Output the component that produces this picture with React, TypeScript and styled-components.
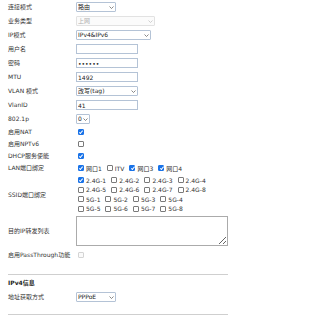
import React from "react";
import styled, {createGlobalStyle} from "styled-components";

const GlobalStyle = createGlobalStyle`
  html, body {
    margin: 0;
    padding: 0;
    background: #fff;
  }
  body {
    font-family: "DejaVu Sans", "Noto Sans CJK SC", sans-serif;
    font-size: 6px;
    color: #333;
  }
`;

const Page = styled.div`
  width: 220px;
  padding: 0 8px;
`;

const Row = styled.div<{ $h?: number; $pt?: number; $pb?: number }>`
  display: flex;
  align-items: center;
  min-height: ${p => p.$h ?? 14}px;
  padding-top: ${p => p.$pt ?? 0}px;
  padding-bottom: ${p => p.$pb ?? 0}px;
`;

const Label = styled.div<{ $bold?: boolean }>`
  width: 68px;
  flex-shrink: 0;
  line-height: 8px;
  white-space: nowrap;
  font-weight: ${p => (p.$bold ? 700 : 400)};
  color: ${p => (p.$bold ? '#222' : '#333')};
`;

const TextInput = styled.input<{ $w: number }>`
  box-sizing: border-box;
  width: ${p => p.$w}px;
  height: 10px;
  margin: 0;
  padding: 0 1px;
  border: 1px solid #b4c3d6;
  border-radius: 0;
  font: inherit;
  color: #222;
  outline: none;
  background: #fff;
`;

const SelectBox = styled.div<{ $w: number }>`
  position: relative;
  width: ${p => p.$w}px;
  height: 10px;
`;

const NativeSelect = styled.select`
  appearance: none;
  box-sizing: border-box;
  width: 100%;
  height: 100%;
  margin: 0;
  padding: 0 0 0 1px;
  border: 1px solid #b4c3d6;
  border-radius: 1px;
  font: inherit;
  line-height: 8px;
  color: #222;
  background: #fff;
  outline: none;

  &:disabled {
    color: #b0b0b0;
    border-color: #e2e2e2;
    background: #fbfbfb;
    opacity: 1;
  }
`;

const Chevron = styled.svg`
  position: absolute;
  right: 2px;
  top: 3.5px;
  width: 5px;
  height: 3px;
  pointer-events: none;
`;

const Check = styled.input.attrs({type: 'checkbox'})`
  appearance: none;
  position: relative;
  box-sizing: border-box;
  width: 6px;
  height: 6px;
  margin: 0 2px 0 0;
  flex-shrink: 0;
  border: 0.8px solid #7a7a7a;
  border-radius: 1px;
  background: #fff;

  &:checked {
    background: #1a73e8;
    border-color: #1a73e8;
  }

  &:checked::after {
    content: "";
    position: absolute;
    left: 1.3px;
    top: 0.2px;
    width: 1.4px;
    height: 2.8px;
    border: solid #fff;
    border-width: 0 0.9px 0.9px 0;
    transform: rotate(40deg);
  }

  &:disabled {
    border-color: #d4d4d4;
    background: #fafafa;
  }
`;

const Checks = styled.div`
  display: flex;
  flex-direction: column;
  padding-left: 2px;
`;

const CheckLine = styled.div<{ $lh: number }>`
  display: flex;
  align-items: center;
  height: ${p => p.$lh}px;
`;

const CheckItem = styled.label`
  display: inline-flex;
  align-items: center;
  margin-right: 5px;
  white-space: nowrap;
  color: #333;
`;

const Area = styled.textarea`
  box-sizing: border-box;
  width: 152px;
  height: 30px;
  margin: 0;
  border: 1px solid #ababab;
  font: inherit;
  outline: none;
`;

const Divider = styled.div<{ $mt: number; $mb?: number }>`
  height: 1px;
  background: #cfcfcf;
  margin-top: ${p => p.$mt}px;
  margin-bottom: ${p => p.$mb ?? 0}px;
`;

const Select = ({w, value, options, disabled}: { w: number; value: string; options: string[]; disabled?: boolean }) => (
  <SelectBox $w={w}>
    <NativeSelect defaultValue={value} disabled={disabled}>
      {options.map(o => <option key={o}>{o}</option>)}
    </NativeSelect>
    <Chevron viewBox="0 0 5 3">
      <polyline points="0.5,0.5 2.5,2.5 4.5,0.5" fill="none" stroke={disabled ? '#c4c4c4' : '#6a6a6a'} strokeWidth="0.8"/>
    </Chevron>
  </SelectBox>
);

const ssid = [
  ['2.4G-1', '2.4G-2', '2.4G-3', '2.4G-4'],
  ['2.4G-5', '2.4G-6', '2.4G-7', '2.4G-8'],
  ['5G-1', '5G-2', '5G-3', '5G-4'],
  ['5G-5', '5G-6', '5G-7', '5G-8'],
];

const lan = [
  {name: '网口1', on: true},
  {name: 'ITV', on: false},
  {name: '网口3', on: true},
  {name: '网口4', on: true},
];

export default function App() {
  return (
    <>
      <GlobalStyle/>
      <Page>
        <Row>
          <Label>连接模式</Label>
          <Select w={40} value="路由" options={['路由', '桥接']}/>
        </Row>
        <Row>
          <Label>业务类型</Label>
          <Select w={79} value="上网" options={['上网']} disabled/>
        </Row>
        <Row>
          <Label>IP模式</Label>
          <Select w={75} value="IPv4&IPv6" options={['IPv4', 'IPv6', 'IPv4&IPv6']}/>
        </Row>
        <Row>
          <Label>用户名</Label>
          <TextInput $w={62} defaultValue=""/>
        </Row>
        <Row>
          <Label>密码</Label>
          <TextInput $w={62} type="password" defaultValue="123456"/>
        </Row>
        <Row>
          <Label>MTU</Label>
          <TextInput $w={62} defaultValue="1492"/>
        </Row>
        <Row>
          <Label>VLAN 模式</Label>
          <Select w={62} value="改写(tag)" options={['改写(tag)', '透传']}/>
        </Row>
        <Row>
          <Label>VlanID</Label>
          <TextInput $w={62} defaultValue="41"/>
        </Row>
        <Row>
          <Label>802.1p</Label>
          <Select w={14} value="0" options={['0', '1', '2', '3', '4', '5', '6', '7']}/>
        </Row>
        <Row $h={12}>
          <Label>启用NAT</Label>
          <Checks><Check defaultChecked/></Checks>
        </Row>
        <Row $h={12}>
          <Label>启用NPTv6</Label>
          <Checks><Check/></Checks>
        </Row>
        <Row $h={12}>
          <Label>DHCP服务使能</Label>
          <Checks><Check defaultChecked/></Checks>
        </Row>
        <Row $h={12}>
          <Label>LAN端口绑定</Label>
          <Checks>
            <CheckLine $lh={8}>
              {lan.map(p => (
                <CheckItem key={p.name}><Check defaultChecked={p.on}/>{p.name}</CheckItem>
              ))}
            </CheckLine>
          </Checks>
        </Row>
        <Row $h={38} $pt={1.5}>
          <Label>SSID端口绑定</Label>
          <Checks>
            {ssid.map((line, i) => (
              <CheckLine key={i} $lh={9.5}>
                {line.map(s => (
                  <CheckItem key={s}><Check defaultChecked={s === '2.4G-1'}/>{s}</CheckItem>
                ))}
              </CheckLine>
            ))}
          </Checks>
        </Row>
        <Row $pt={2.5} $pb={2}>
          <Label>目的IP转发列表</Label>
          <Area/>
        </Row>
        <Row>
          <Label>启用PassThrough功能</Label>
          <Checks><Check disabled/></Checks>
        </Row>
        <Divider $mt={12} $mb={1}/>
        <Row>
          <Label $bold>IPv4信息</Label>
        </Row>
        <Row>
          <Label>地址获取方式</Label>
          <Select w={40} value="PPPoE" options={['PPPoE', 'DHCP', '静态']}/>
        </Row>
        <Divider $mt={10}/>
      </Page>
    </>
  );
}
